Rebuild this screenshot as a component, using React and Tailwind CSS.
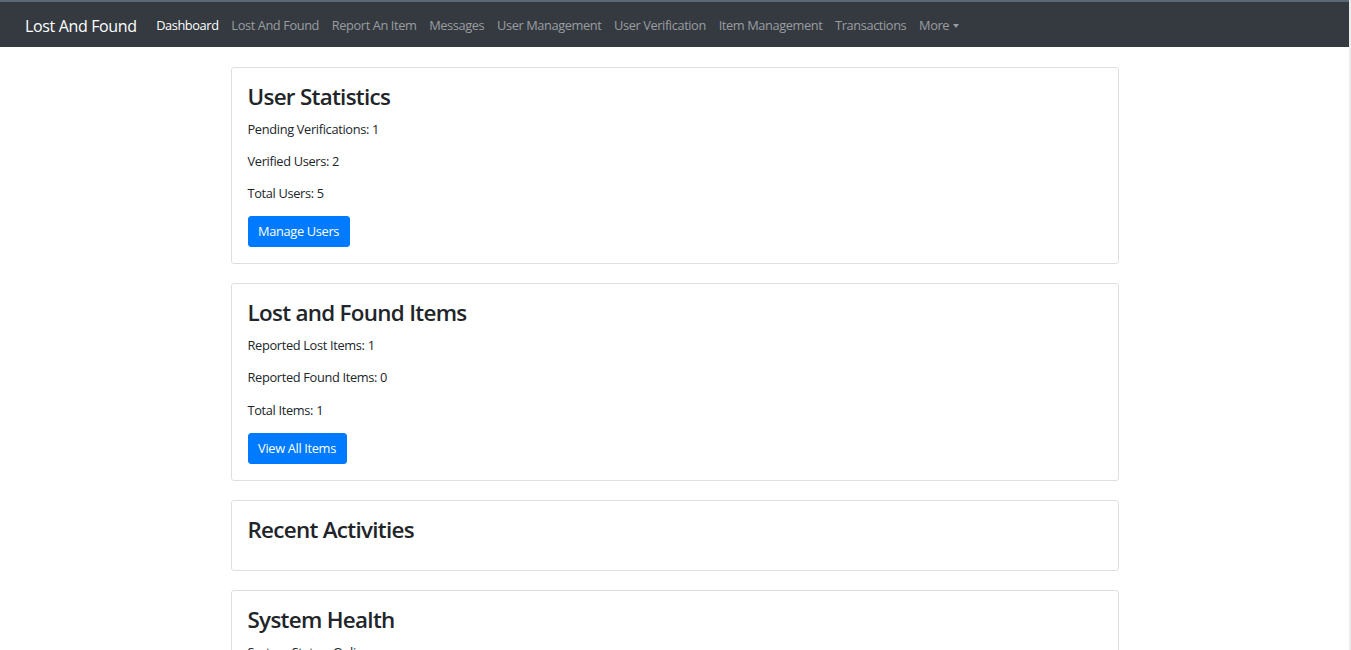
import React from 'react';

const navLinks = [
  'Lost And Found',
  'Report An Item',
  'Messages',
  'User Management',
  'User Verification',
  'Item Management',
  'Transactions',
];

function Card({ title, children, last }) {
  return (
    <div className={`rounded-[3px] border border-[#dfdfdf] bg-white ${last ? '' : 'mb-[19px]'}`}>
      <div className="p-4">
        <h3 className="mb-[9px] text-[22.4px] font-semibold leading-[1.2] tracking-[-0.7px] text-[#212529]">{title}</h3>
        {children}
      </div>
    </div>
  );
}

function Stat({ children }) {
  return <p className="mb-[13px] text-[12.8px] leading-[19.2px] tracking-[-0.33px] text-[#212529]">{children}</p>;
}

function Btn({ children }) {
  return (
    <button className="rounded-[3px] border border-[#007bff] bg-[#007bff] px-[9.6px] py-[4.8px] text-[12.8px] leading-[19.2px] tracking-[-0.33px] text-white">
      {children}
    </button>
  );
}

export default function App() {
  return (
    <div
      className="flex min-h-screen bg-white"
      style={{ fontFamily: '"Segoe UI", "Open Sans", "Noto Sans", sans-serif' }}
    >
      <div className="flex-1 min-w-0">
        <div className="h-[2px] bg-[#5a6873]" />
        {/* Navbar */}
        <nav className="flex h-[45px] items-center bg-[#343a40] pl-[25px] pt-[2px]">
          <span className="mr-[13px] text-[16px] leading-none tracking-[-0.35px] text-white">Lost And Found</span>
          <ul className="flex items-center text-[12.8px] tracking-[-0.4px]">
            <li className="px-[6.4px] text-white">Dashboard</li>
            {navLinks.map((l) => (
              <li key={l} className="px-[6.4px] text-[#9a9da0]">
                {l}
              </li>
            ))}
            <li className="flex items-center px-[6.4px] text-[#9a9da0]">
              More
              <span className="ml-[4px] mt-[1px] h-0 w-0 border-x-[3.5px] border-t-[4px] border-x-transparent border-t-[#9a9da0]" />
            </li>
          </ul>
        </nav>

        {/* Content */}
        <div className="mx-auto w-[888px] pt-[20px]">
          <Card title="User Statistics">
            <Stat>Pending Verifications: 1</Stat>
            <Stat>Verified Users: 2</Stat>
            <Stat>Total Users: 5</Stat>
            <Btn>Manage Users</Btn>
          </Card>

          <Card title="Lost and Found Items">
            <Stat>Reported Lost Items: 1</Stat>
            <Stat>Reported Found Items: 0</Stat>
            <Stat>Total Items: 1</Stat>
            <Btn>View All Items</Btn>
          </Card>

          <Card title="Recent Activities">
            <div className="h-[2px]" />
          </Card>

          <Card title="System Health" last>
            <Stat>System Status: Online</Stat>
            <Stat>Server Uptime: 99.9%</Stat>
          </Card>
        </div>
      </div>
      <div className="w-[2px] shrink-0 bg-[#ececec]" />
    </div>
  );
}
